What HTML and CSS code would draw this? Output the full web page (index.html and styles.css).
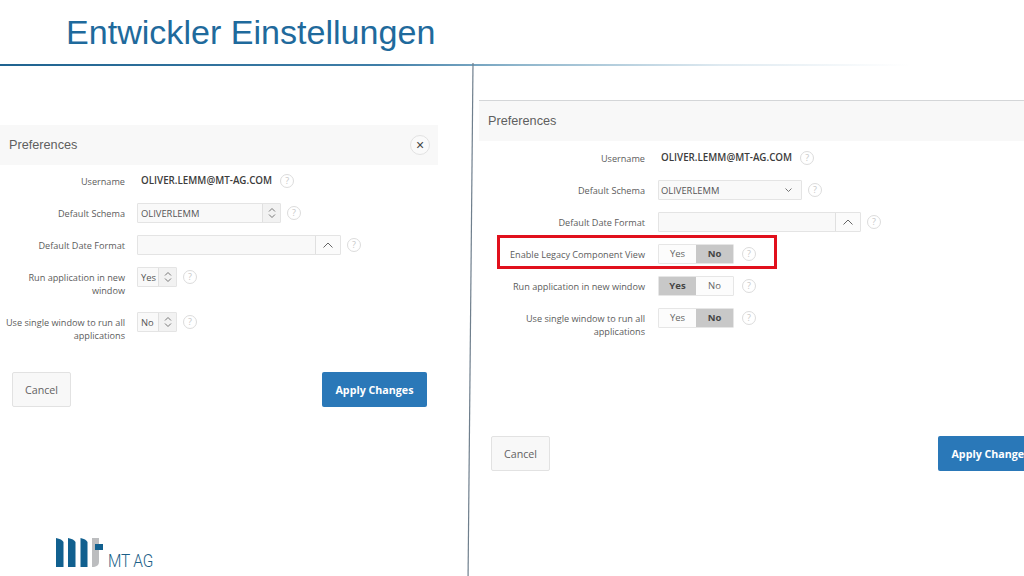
FILE: index.html
```html
<!DOCTYPE html>
<html lang="de">
<head>
<meta charset="utf-8">
<title>Entwickler Einstellungen</title>
<link rel="stylesheet" href="styles.css">
</head>
<body>
<svg width="0" height="0" class="defs">
  <symbol id="spin" viewBox="0 0 12 16"><path d="M3 6.500 6 3.500 9 6.500M3 9.500 6 12.500 9 9.500" fill="none" stroke="#777" stroke-width="1"/></symbol>
  <symbol id="up" viewBox="0 0 12 8"><path d="M1.500 6.500 6 2 10.500 6.500" fill="none" stroke="#666" stroke-width="1"/></symbol>
  <symbol id="down" viewBox="0 0 12 8"><path d="M2 2 6 6 10 2" fill="none" stroke="#666" stroke-width="1.200"/></symbol>
</svg>
<main class="slide">
  <h1 class="title">Entwickler Einstellungen</h1>
  <div class="rule"></div>

  <section class="panel panel-left">
    <header class="panel-head">
      <h2 class="panel-title">Preferences</h2>
      <button class="close" type="button" aria-label="Close">×</button>
    </header>
    <div class="form">
      <div class="row">
        <span class="label">Username</span>
        <div class="field"><strong class="value">OLIVER.LEMM@MT-AG.COM</strong><span class="help">?</span></div>
      </div>
      <div class="row">
        <span class="label">Default Schema</span>
        <div class="field">
          <div class="select w-schema-l"><span class="select-text">OLIVERLEMM</span><span class="spin"><svg class="spin-icon"><use href="#spin"/></svg></span></div>
          <span class="help">?</span>
        </div>
      </div>
      <div class="row">
        <span class="label">Default Date Format</span>
        <div class="field">
          <div class="select w-date-l"><span class="select-text"></span><span class="lov"><svg class="chev"><use href="#up"/></svg></span></div>
          <span class="help">?</span>
        </div>
      </div>
      <div class="row row-tall">
        <span class="label">Run application in new window</span>
        <div class="field">
          <div class="select w-yn"><span class="select-text">Yes</span><span class="spin"><svg class="spin-icon"><use href="#spin"/></svg></span></div>
          <span class="help">?</span>
        </div>
      </div>
      <div class="row row-tall">
        <span class="label">Use single window to run all applications</span>
        <div class="field">
          <div class="select w-yn"><span class="select-text">No</span><span class="spin"><svg class="spin-icon"><use href="#spin"/></svg></span></div>
          <span class="help">?</span>
        </div>
      </div>
    </div>
    <div class="actions">
      <button class="btn btn-cancel" type="button">Cancel</button>
      <button class="btn btn-apply" type="button">Apply Changes</button>
    </div>
  </section>

  <section class="panel panel-right">
    <header class="panel-head">
      <h2 class="panel-title">Preferences</h2>
    </header>
    <div class="form">
      <div class="row">
        <span class="label">Username</span>
        <div class="field"><strong class="value">OLIVER.LEMM@MT-AG.COM</strong><span class="help">?</span></div>
      </div>
      <div class="row">
        <span class="label">Default Schema</span>
        <div class="field">
          <div class="select w-schema-r"><span class="select-text">OLIVERLEMM</span><svg class="chev chev-down"><use href="#down"/></svg></div>
          <span class="help">?</span>
        </div>
      </div>
      <div class="row">
        <span class="label">Default Date Format</span>
        <div class="field">
          <div class="select w-date-r"><span class="select-text"></span><span class="lov"><svg class="chev"><use href="#up"/></svg></span></div>
          <span class="help">?</span>
        </div>
      </div>
      <div class="row">
        <span class="label">Enable Legacy Component View</span>
        <div class="field">
          <div class="toggle"><span class="opt">Yes</span><span class="opt opt-on">No</span></div>
          <span class="help">?</span>
        </div>
      </div>
      <div class="row">
        <span class="label">Run application in new window</span>
        <div class="field">
          <div class="toggle"><span class="opt opt-on">Yes</span><span class="opt">No</span></div>
          <span class="help">?</span>
        </div>
      </div>
      <div class="row row-tall">
        <span class="label">Use single window to run all applications</span>
        <div class="field">
          <div class="toggle"><span class="opt">Yes</span><span class="opt opt-on">No</span></div>
          <span class="help">?</span>
        </div>
      </div>
    </div>
    <div class="actions">
      <button class="btn btn-cancel" type="button">Cancel</button>
      <button class="btn btn-apply" type="button">Apply Changes</button>
    </div>
    <div class="highlight"></div>
  </section>

  <svg class="divider" width="10" height="520" viewBox="0 0 10 520"><line x1="6" y1="0" x2="1" y2="520" stroke="#6f7f8d" stroke-width="1.200"/></svg>

  <div class="logo">
    <svg class="logo-mark" width="48" height="30" viewBox="0 0 48 30">
      <path d="M0 0 Q6 1 7.500 4V29H0Z" fill="#11608f"/>
      <path d="M12 0 Q18 1 19.500 4V29H12Z" fill="#11608f"/>
      <path d="M24.500 0 Q30 1 31.500 4V29H24.500Z" fill="#11608f"/>
      <path d="M36 0H43V24Q43 28 38 29H36Z" fill="#bcbdbf"/>
      <rect x="39" y="6" width="8" height="6" fill="#11608f"/>
    </svg>
    <span class="logo-text">MT AG</span>
  </div>
</main>
</body>
</html>
```
FILE: styles.css
```css
* { box-sizing: border-box; }
html, body { margin: 0; padding: 0; background: #fff; }
.defs { position: absolute; }
.slide {
  position: relative;
  width: 1024px;
  height: 576px;
  overflow: hidden;
  background: #fff;
  font-family: "Open Sans", sans-serif;
  color: #5c5c5c;
}
.title {
  margin: 0;
  padding: 12px 0 0 66px;
  height: 64px;
  font: 400 34.100px/40px "Liberation Sans", Arial, sans-serif;
  color: #1f6a9c;
}
.rule {
  height: 2px;
  background: linear-gradient(90deg, #1f6390 0, #3f7ea8 380px, #8fb6cc 520px, #dfeaf1 720px, #ffffff 910px);
}

.panel { position: absolute; }
.panel-left { left: 0; top: 125px; width: 438px; --label: 125px; --gap: 12px; }
.panel-right { left: 479px; top: 100px; width: 576px; --label: 166px; --gap: 13px; border-top: 1px solid #d4d6d8; }

.panel-head {
  display: flex;
  align-items: center;
  justify-content: space-between;
  height: 40px;
  padding: 0 8px 0 9px;
  background: #f8f8f8;
}
.panel-title {
  margin: 0;
  font: 400 12.700px/20px "Liberation Sans", Arial, sans-serif;
  color: #5f5f5f;
}
.close {
  width: 20px;
  height: 20px;
  padding: 0;
  border: 1px solid #e2e2e2;
  border-radius: 50%;
  background: #fafafa;
  color: #444;
  font: 400 14px/17px "Liberation Sans", Arial, sans-serif;
}

.row {
  display: grid;
  grid-template-columns: var(--label) 1fr;
  column-gap: var(--gap);
  height: 32px;
  padding-top: 6px;
}
.row-tall { height: 45px; }
.panel-right .form { padding-top: 1px; }

.label {
  font-size: 9.150px;
  line-height: 13px;
  padding-top: 3.500px;
  text-align: right;
  color: #5c5c5c;
}
.field { display: flex; align-items: flex-start; gap: 6px; }
.value {
  padding: 3px 0 0 4px;
  margin-right: 2px;
  font-size: 9.800px;
  line-height: 14px;
  font-weight: 600;
  color: #3c3c3c;
  white-space: nowrap;
}
.panel-right .value { padding-left: 3px; }
.help {
  flex: none;
  width: 14px;
  height: 14px;
  margin-top: 3px;
  border: 1px solid #dcdcdc;
  border-radius: 50%;
  font-size: 9px;
  line-height: 12px;
  text-align: center;
  color: #c8c8c8;
}

.select {
  display: flex;
  align-items: center;
  height: 20px;
  border: 1px solid #e4e4e4;
  border-radius: 1px;
  background: #f9f9f9;
  font-size: 9.400px;
  color: #555;
}
.select-text { flex: 1; padding-left: 3px; white-space: nowrap; }
.panel-right .select-text { padding-left: 2px; }
.w-schema-l { width: 144px; }
.w-date-l { width: 204px; }
.w-yn { width: 40px; }
.w-schema-r { width: 144px; padding-right: 8px; }
.w-date-r { width: 203px; }
.spin, .lov {
  display: flex;
  flex: none;
  align-items: center;
  justify-content: center;
  height: 100%;
  border-left: 1px solid #e0e0e0;
}
.spin { width: 18px; background: #f2f2f2; }
.lov { width: 25px; background: #fbfbfb; }
.spin-icon { width: 12px; height: 16px; }
.chev { width: 12px; height: 8px; }
.chev-down { width: 9px; height: 6px; }

.toggle {
  display: flex;
  width: 76px;
  height: 20px;
  border: 1px solid #e6e6e6;
  border-radius: 1px;
  background: #fcfcfc;
}
.opt {
  flex: 1;
  font-size: 9.500px;
  line-height: 18px;
  text-align: center;
  color: #666;
}
.opt-on { background: #c8c8c8; font-weight: 700; color: #444; }
.panel-right .toggle + .help { margin-left: 2px; }

.actions { display: flex; justify-content: space-between; }
.panel-left .actions { margin-top: 21px; padding: 0 11px 0 12px; }
.panel-right .actions { margin-top: 89px; padding: 0 12px; }

.btn {
  height: 35px;
  padding: 0;
  border-radius: 2px;
  font-family: "Open Sans", sans-serif;
  font-size: 10.700px;
  line-height: 16px;
}
.btn-cancel { width: 59px; border: 1px solid #e2e2e2; background: #f8f8f8; color: #626262; }
.btn-apply { width: 105px; border: 0; background: #2a78b8; color: #fff; font-weight: 700; }

.highlight {
  position: absolute;
  left: 18px;
  top: 134px;
  width: 280px;
  height: 34px;
  border: 3px solid #e1101c;
}
.divider { position: absolute; left: 467px; top: 63px; }

.logo { position: absolute; left: 56px; top: 538px; display: flex; align-items: flex-end; gap: 4px; }
.logo-mark { display: block; }
.logo-text {
  margin-bottom: -2px;
  font: 300 18px/18px Roboto, sans-serif;
  letter-spacing: -0.200px;
  color: #1c5f88;
  white-space: nowrap;
  transform: scaleX(0.86);
  transform-origin: left center;
}
```
